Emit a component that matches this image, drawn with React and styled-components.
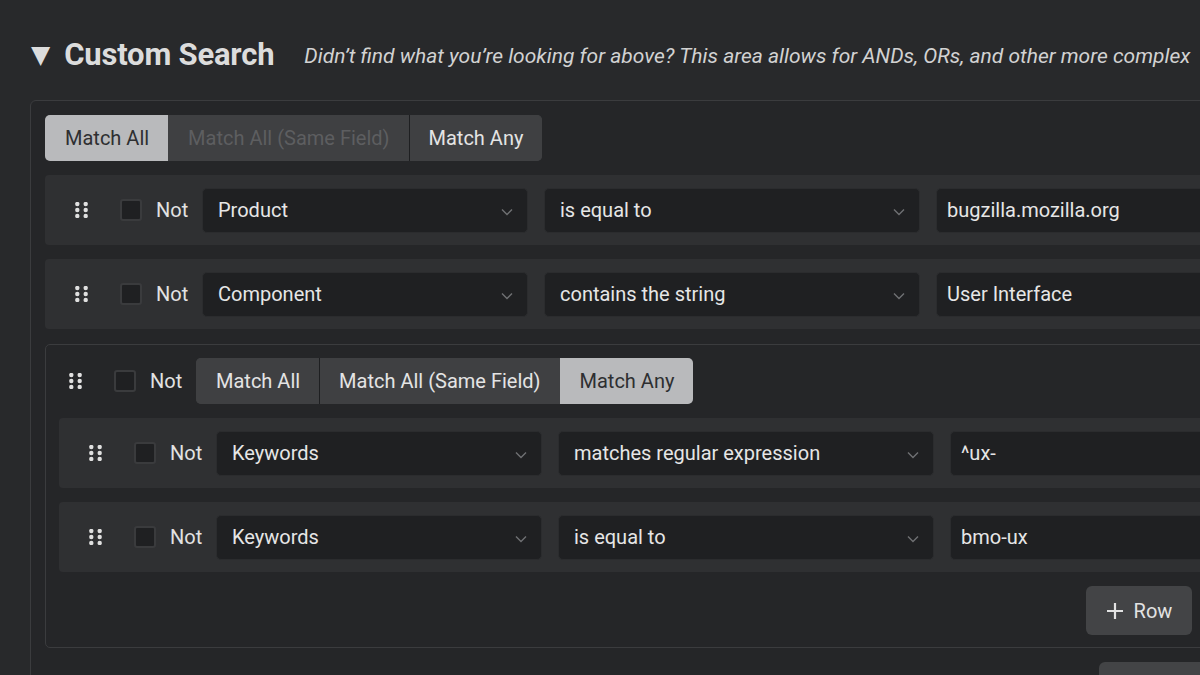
import React from 'react';
import styled, { createGlobalStyle } from 'styled-components';

const GlobalStyle = createGlobalStyle`
  html, body {
    margin: 0;
    padding: 0;
    background: #28292b;
    overflow: hidden;
  }
  body {
    font-family: Roboto, "Liberation Sans", sans-serif;
    color: #e4e4e4;
  }
`;

export default function App() {
  return (<Page>
    <GlobalStyle />
    <Heading>
      <Caret>▼</Caret>
      <Title>Custom Search</Title>
      <Hint>Didn’t find what you’re looking for above? This area allows for ANDs, ORs, and other more complex</Hint>
    </Heading>
    <Panel>
      <Segments items={['Match All', 'Match All (Same Field)', 'Match Any']} active={0} disabled={1} />
      <Row field="Product" operator="is equal to" value="bugzilla.mozilla.org" />
      <Row field="Component" operator="contains the string" value="User Interface" />
      <Group>
        <GroupHead>
          <Handle />
          <Check />
          <NotLabel>Not</NotLabel>
          <Segments items={['Match All', 'Match All (Same Field)', 'Match Any']} active={2} />
        </GroupHead>
        <Row field="Keywords" operator="matches regular expression" value="^ux-" />
        <Row field="Keywords" operator="is equal to" value="bmo-ux" />
        <Actions>
          <ActionButton>
            <svg width="18" height="18" viewBox="0 0 18 18">
              <path d="M9 1v16M1 9h16" stroke="#e2e2e2" strokeWidth="2.2" />
            </svg>
            Row
          </ActionButton>
        </Actions>
      </Group>
      <Actions>
        <ActionButton wide>Group</ActionButton>
      </Actions>
    </Panel>
  </Page>);
}

const Segments = ({ items, active, disabled }) => (
  <SegmentBar>
    {items.map((label, i) => (
      <Segment key={label} active={i === active} disabled={i === disabled}
        divider={i > 0 && i !== active && i - 1 !== active}>
        {label}
      </Segment>
    ))}
  </SegmentBar>
);

const Row = ({ field, operator, value }) => (
  <RowBox>
    <Handle />
    <Check />
    <NotLabel>Not</NotLabel>
    <Select width={326}>{field}<Chevron /></Select>
    <Select width={376}>{operator}<Chevron /></Select>
    <ValueInput>{value}</ValueInput>
  </RowBox>
);

const Handle = () => (
  <HandleBox>
    <svg width="13" height="16" viewBox="0 0 13 16">
      {[2, 8, 14].map(y => (
        <g key={y}>
          <circle cx="2.3" cy={y} r="2.2" fill="#e0e0e0" />
          <circle cx="10.7" cy={y} r="2.2" fill="#e0e0e0" />
        </g>
      ))}
    </svg>
  </HandleBox>
);

const Chevron = () => (
  <ChevronIcon width="12" height="8" viewBox="0 0 12 8">
    <path d="M1 1.5l5 5 5-5" fill="none" stroke="#6f7073" strokeWidth="1.4" />
  </ChevronIcon>
);

const Page = styled.div`
  width: 1240px;
  padding: 35px 0 0 30px;
`;

const Heading = styled.div`
  display: flex;
  align-items: center;
  height: 38px;
  margin-bottom: 27px;
`;

const Caret = styled.span`
  font-family: "DejaVu Sans", sans-serif;
  font-size: 25px;
  color: #dcdcdc;
  margin: 0 14px 0 1px;
`;

const Title = styled.h2`
  margin: 0 30px 0 0;
  font-size: 31px;
  font-weight: 700;
  color: #dcdcdc;
  letter-spacing: -0.2px;
`;

const Hint = styled.span`
  font-style: italic;
  font-size: 21px;
  color: #d2d2d2;
  white-space: nowrap;
  margin-top: 4px;
`;

const Panel = styled.div`
  border: 1px solid #3b3c3e;
  border-radius: 6px;
  background: #252628;
  padding: 14px;
  display: flex;
  flex-direction: column;
  gap: 14px;
  align-items: stretch;
`;

const SegmentBar = styled.div`
  display: flex;
  align-self: flex-start;
  height: 46px;
  border-radius: 5px;
  overflow: hidden;
  background: #3f4042;
`;

const Segment = styled.div`
  display: flex;
  align-items: center;
  padding: 0 19px;
  font-size: 20px;
  background: ${p => (p.active ? '#b9babc' : '#3f4042')};
  color: ${p => (p.active ? '#2e2f31' : p.disabled ? '#5d5e60' : '#e4e4e4')};
  border-left: 1px solid ${p => (p.divider ? '#1e1f21' : 'transparent')};
  white-space: nowrap;
`;

const RowBox = styled.div`
  display: flex;
  align-items: center;
  height: 70px;
  padding: 0 12px 0 30px;
  background: #2f3032;
  border-radius: 4px;
  gap: 14px;
`;

const HandleBox = styled.div`
  display: flex;
  width: 13px;
  margin-right: 18px;
  flex-shrink: 0;
`;

const Check = styled.div`
  width: 18px;
  height: 18px;
  border: 2px solid #3a3b3d;
  border-radius: 3px;
  background: #1f2022;
  flex-shrink: 0;
`;

const NotLabel = styled.span`
  font-size: 20px;
  color: #e2e2e2;
  width: 32px;
`;

const Select = styled.div`
  position: relative;
  display: flex;
  align-items: center;
  box-sizing: border-box;
  width: ${p => p.width}px;
  height: 45px;
  padding: 0 15px;
  margin-right: 2px;
  background: #1f2022;
  border: 1px solid #2b2c2e;
  border-radius: 5px;
  font-size: 20px;
  color: #e6e6e6;
  flex-shrink: 0;
  white-space: nowrap;
`;

const ChevronIcon = styled.svg`
  position: absolute;
  right: 14px;
  top: 19px;
`;

const ValueInput = styled.div`
  display: flex;
  align-items: center;
  box-sizing: border-box;
  flex: 1;
  height: 45px;
  padding: 0 10px;
  background: #1f2022;
  border: 1px solid #2b2c2e;
  border-radius: 5px;
  font-size: 20px;
  color: #e6e6e6;
  white-space: nowrap;
`;

const Group = styled.div`
  margin-top: 1px;
  border: 1px solid #3b3c3e;
  border-radius: 5px;
  padding: 13px 13px 12px 13px;
  display: flex;
  flex-direction: column;
  gap: 14px;
`;

const GroupHead = styled.div`
  display: flex;
  align-items: center;
  gap: 14px;
  padding-left: 10px;
  height: 46px;
`;

const Actions = styled.div`
  display: flex;
  justify-content: flex-end;
  padding-right: 49px;
`;

const ActionButton = styled.div`
  display: flex;
  align-items: center;
  justify-content: center;
  gap: 10px;
  width: ${p => (p.wide ? 107 : 106)}px;
  height: 49px;
  border-radius: 6px;
  background: #434446;
  font-size: 20px;
  color: #e2e2e2;
`;
